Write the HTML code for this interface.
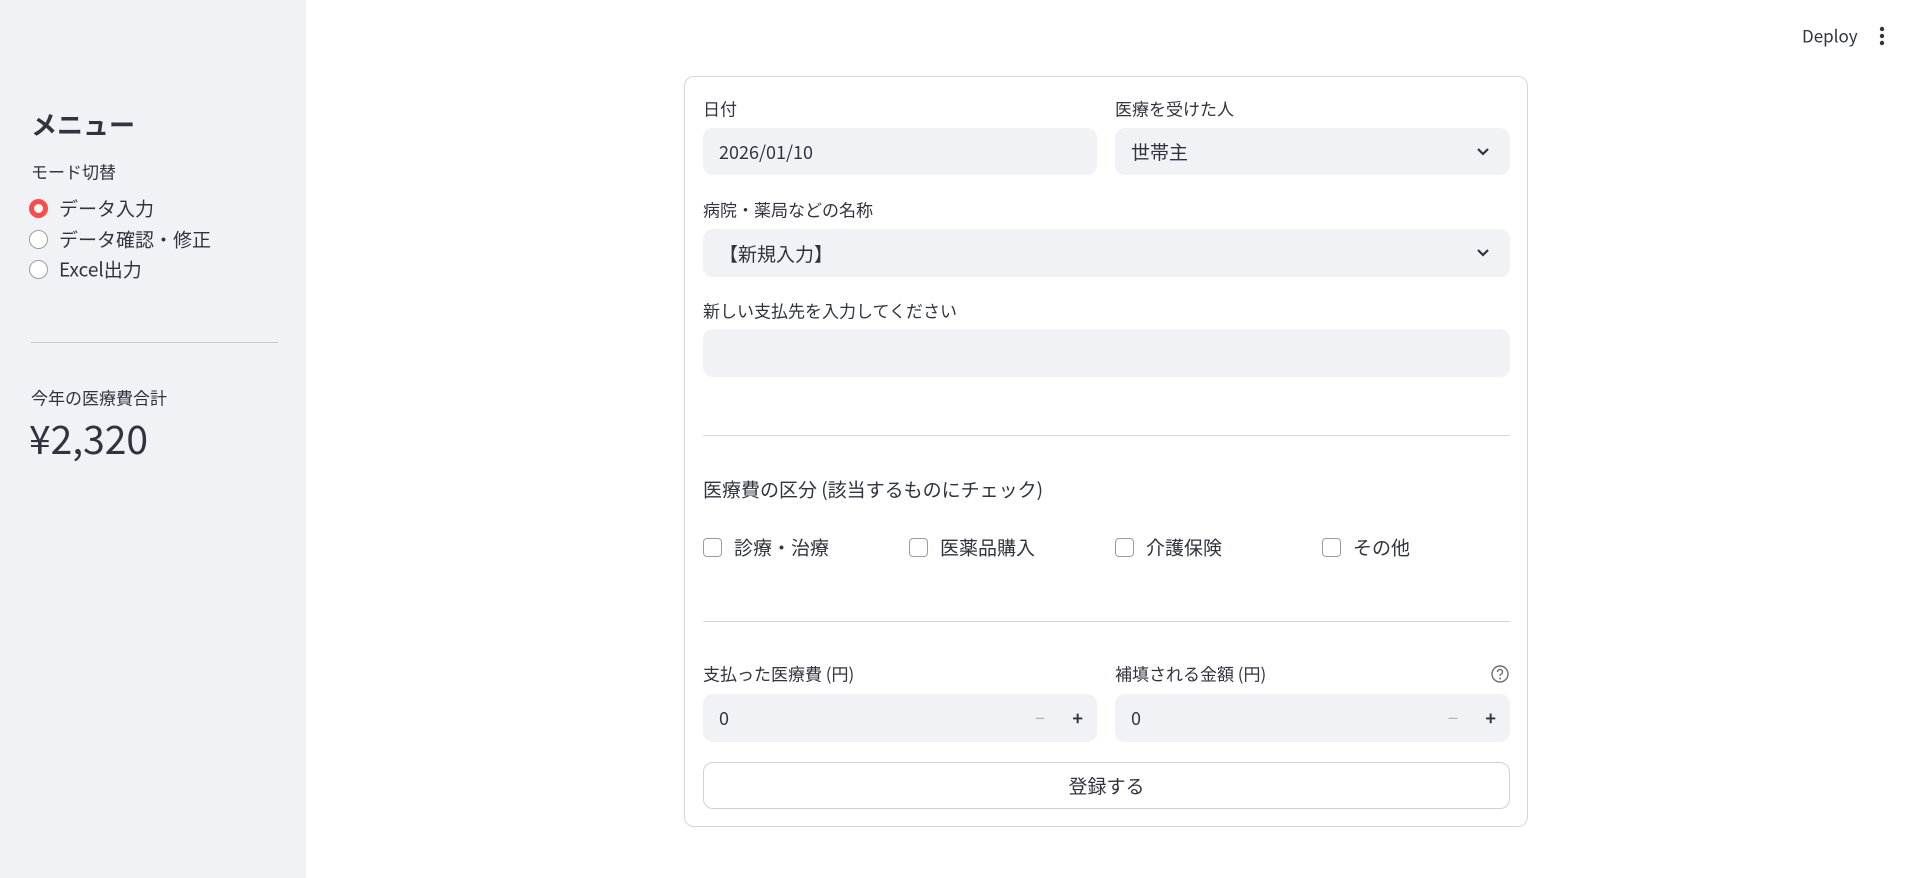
<!DOCTYPE html>
<html><head><meta charset="utf-8"><style>
*{box-sizing:border-box;margin:0;padding:0}
body{width:1920px;height:878px;position:relative;background:#fff;font-family:"Noto Sans CJK JP","Liberation Sans",sans-serif;color:#31333F;overflow:hidden}
.a{position:absolute;white-space:nowrap}
.sb{position:absolute;left:0;top:0;width:306px;height:878px;background:#F0F2F6}
.card{position:absolute;left:684px;top:76px;width:844px;height:751px;border:1px solid #d6d6d9;border-radius:10px}
.inp{position:absolute;background:#F0F2F6;border-radius:10px;font-size:19px;display:flex;align-items:center;padding-left:16px}
.lbl{font-size:17px;transform:translateY(-50%)}
.chev{position:absolute;right:20px;top:50%;margin-top:-6px}
.radio{position:absolute;left:29px;width:19px;height:19px;border-radius:50%;border:1.5px solid #9a9ca5;background:#fff}
.cb{position:absolute;width:19px;height:19px;border:1px solid #9a9ca5;border-radius:4px;background:#fff;top:538px}
.hr{position:absolute;height:1px;background:#d6d6d9}
.pm{position:absolute;top:50%;transform:translateY(-50%);line-height:1}
</style></head><body>
<div class="sb"></div>
<div class="a" style="left:31px;top:124px;font-size:26px;font-weight:bold;transform:translateY(-50%)">メニュー</div>
<div class="a lbl" style="left:31px;top:171px;font-size:17px">モード切替</div>
<div class="radio" style="top:199px;border:5px solid #FF4B4B"></div>
<div class="radio" style="top:230px"></div>
<div class="radio" style="top:260px"></div>
<div class="a lbl" style="left:59px;top:208px;font-size:19px">データ入力</div>
<div class="a lbl" style="left:59px;top:239px;font-size:19px">データ確認・修正</div>
<div class="a lbl" style="left:59px;top:269px;font-size:19px">Excel出力</div>
<div class="hr" style="left:31px;top:342px;width:247px;background:#c9cbd1"></div>
<div class="a lbl" style="left:31px;top:397px;font-size:17px">今年の医療費合計</div>
<div class="a" style="left:29px;top:438px;font-size:39px;transform:translateY(-50%)">¥2,320</div>

<div class="a" style="left:1802px;top:35px;font-size:17px;transform:translateY(-50%)">Deploy</div>
<svg class="a" style="left:1876px;top:26px" width="12" height="20"><circle cx="6" cy="3" r="2.2" fill="#31333F"/><circle cx="6" cy="10" r="2.2" fill="#31333F"/><circle cx="6" cy="17" r="2.2" fill="#31333F"/></svg>

<div class="card"></div>
<div class="a lbl" style="left:703px;top:108px">日付</div>
<div class="a lbl" style="left:1115px;top:108px">医療を受けた人</div>
<div class="inp" style="left:703px;top:128px;width:394px;height:47px;font-size:18px">2026/01/10</div>
<div class="inp" style="left:1115px;top:128px;width:395px;height:47px">世帯主<svg class="chev" width="14" height="12"><path d="M2 3l5 5 5-5" stroke="#31333F" stroke-width="2.2" fill="none"/></svg></div>
<div class="a lbl" style="left:703px;top:209px">病院・薬局などの名称</div>
<div class="inp" style="left:703px;top:229px;width:807px;height:48px">【新規入力】<svg class="chev" width="14" height="12"><path d="M2 3l5 5 5-5" stroke="#31333F" stroke-width="2.2" fill="none"/></svg></div>
<div class="a lbl" style="left:703px;top:310px">新しい支払先を入力してください</div>
<div class="inp" style="left:703px;top:329px;width:807px;height:48px"></div>
<div class="hr" style="left:703px;top:435px;width:807px"></div>
<div class="a" style="left:703px;top:489px;font-size:19px;transform:translateY(-50%)">医療費の区分 (該当するものにチェック)</div>
<div class="cb" style="left:703px"></div><div class="a lbl" style="left:734px;top:547px;font-size:19px">診療・治療</div>
<div class="cb" style="left:909px"></div><div class="a lbl" style="left:940px;top:547px;font-size:19px">医薬品購入</div>
<div class="cb" style="left:1115px"></div><div class="a lbl" style="left:1146px;top:547px;font-size:19px">介護保険</div>
<div class="cb" style="left:1322px"></div><div class="a lbl" style="left:1353px;top:547px;font-size:19px">その他</div>
<div class="hr" style="left:703px;top:621px;width:807px"></div>
<div class="a lbl" style="left:703px;top:673px">支払った医療費 (円)</div>
<div class="a lbl" style="left:1115px;top:673px">補填される金額 (円)</div>
<svg class="a" style="left:1490px;top:664px" width="20" height="20"><circle cx="10" cy="10" r="8" stroke="#6b6d78" stroke-width="1.4" fill="none"/><path d="M7.5 8a2.5 2.5 0 1 1 3.5 2.2c-.8.4-1 .9-1 1.6" stroke="#6b6d78" stroke-width="1.4" fill="none"/><circle cx="10" cy="14.5" r="1" fill="#6b6d78"/></svg>
<div class="inp" style="left:703px;top:694px;width:394px;height:48px;font-size:18px">0<span class="pm" style="right:52px;color:#b0b2b8">−</span><span class="pm" style="right:14px;font-weight:bold">+</span></div>
<div class="inp" style="left:1115px;top:694px;width:395px;height:48px;font-size:18px">0<span class="pm" style="right:52px;color:#b0b2b8">−</span><span class="pm" style="right:14px;font-weight:bold">+</span></div>
<div class="a" style="left:703px;top:762px;width:807px;height:47px;border:1px solid #d0d1d6;border-radius:10px;display:flex;align-items:center;justify-content:center;font-size:19px">登録する</div>
</body></html>
